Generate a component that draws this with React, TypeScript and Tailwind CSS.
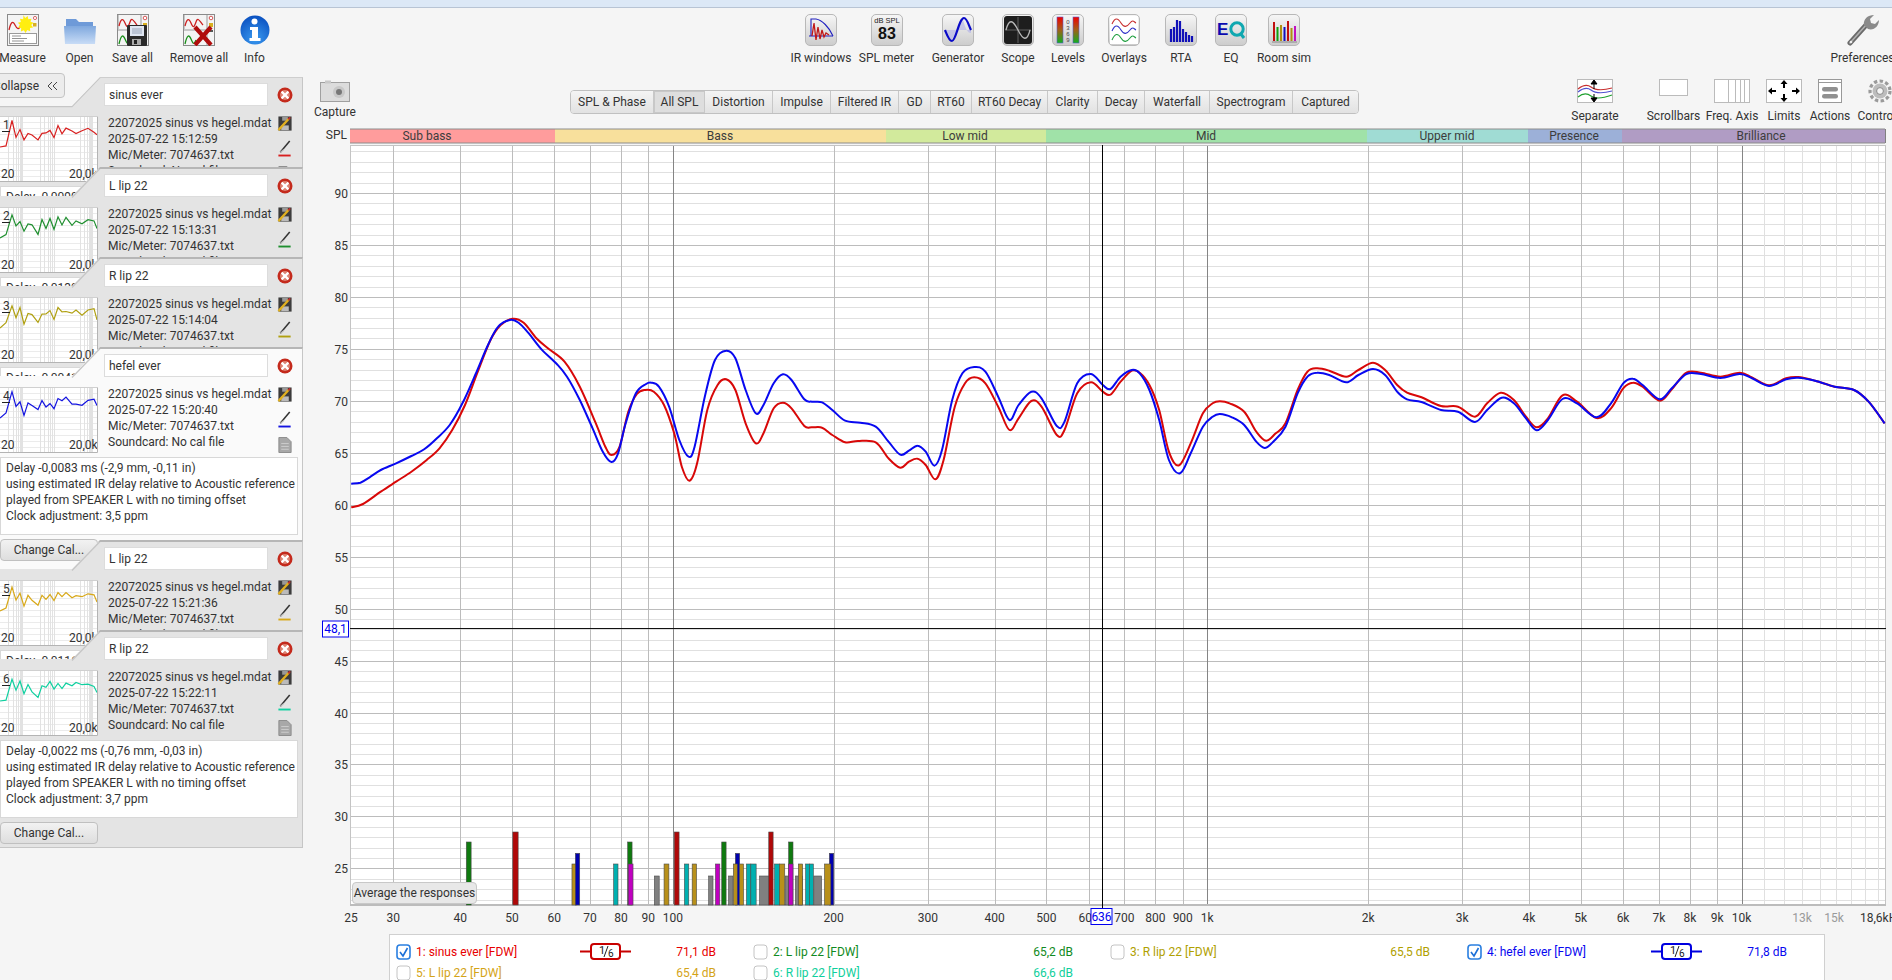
import type { ReactNode } from "react";

type Pt = [number, number];

// frequency and level to page pixels
const fx = (f: number) => 672.8 + 534.4 * Math.log10(f / 100);
const dy = (db: number) => 193 + (90 - db) * 10.39;
const snap = (v: number) => Math.round(v) + 0.5;

const smooth = (p: Pt[]) => {
  let d = `M${p[0][0].toFixed(1)} ${p[0][1].toFixed(1)}`;
  for (let i = 0; i < p.length - 1; i++) {
    const a = p[Math.max(i - 1, 0)];
    const b = p[i];
    const c = p[i + 1];
    const e = p[Math.min(i + 2, p.length - 1)];
    d += `C${(b[0] + (c[0] - a[0]) / 6).toFixed(1)} ${(b[1] + (c[1] - a[1]) / 6).toFixed(1)} ${(c[0] - (e[0] - b[0]) / 6).toFixed(1)} ${(c[1] - (e[1] - b[1]) / 6).toFixed(1)} ${c[0].toFixed(1)} ${c[1].toFixed(1)}`;
  }
  return d;
};

const lowBlue: Pt[] = [[22,581],[40,578],[58,562],[80,540],[110,520],[140,498],[165,478],[190,445],[215,405],[240,340],[265,255],[290,165],[310,110],[333,90],[350,98],[370,130],[395,178],[425,222],[445,260],[470,330],[495,415],[515,485],[532,516],[545,490],[560,400],[580,310],[600,282],[610,278],[625,290],[645,350],[665,450],[683,500],[695,470],[715,320],[735,210],[757,182],[775,205],[795,300],[815,370],[830,345],[850,280],[868,253],[885,270],[910,328],[925,335],[945,337],[965,360],[990,392],[1020,398],[1050,410],[1075,455],[1098,494],[1115,482],[1132,467],[1148,485],[1165,527],[1180,480],[1200,330],[1220,250],[1243,231],[1265,245],[1290,320],[1312,390],[1330,345],[1355,305],[1375,325],[1405,408],[1420,395],[1445,280],[1472,252],[1495,285],[1510,297],[1530,260],[1552,240]];
const lowRed: Pt[] = [[22,652],[45,642],[80,605],[110,575],[140,545],[170,510],[195,475],[220,420],[245,345],[270,245],[295,150],[315,105],[338,86],[360,98],[385,145],[410,178],[440,215],[470,290],[500,395],[520,470],[532,495],[548,470],[565,365],[582,312],[598,300],[615,305],[635,345],[655,430],[670,530],[685,572],[700,520],[720,360],[740,285],[757,268],[775,300],[795,400],[815,460],[830,430],[850,355],[868,338],[885,355],[910,408],[925,412],[945,413],[965,435],[990,457],[1015,453],[1050,457],[1075,505],[1098,533],[1115,515],[1132,506],[1148,525],[1167,568],[1183,510],[1205,350],[1225,280],[1243,262],[1265,280],[1290,350],[1312,420],[1330,385],[1355,333],[1375,350],[1405,435],[1420,420],[1445,310],[1472,277],[1495,305],[1510,314],[1530,275],[1552,242]];
const highBlue: Pt[] = [[20,160],[40,210],[60,300],[80,420],[103,460],[125,400],[150,320],[170,290],[185,282],[210,292],[235,315],[260,365],[277,384],[295,365],[320,320],[345,220],[365,170],[385,158],[410,165],[445,187],[470,165],[500,147],[525,165],[550,215],[570,238],[600,246],[640,270],[675,275],[710,306],[735,270],[765,233],[790,250],[815,295],[837,331],[860,300],[890,237],[920,250],[960,292],[990,250],[1015,190],[1035,176],[1055,195],[1090,238],[1115,205],[1145,162],[1175,162],[1215,174],[1255,162],[1280,175],[1315,198],[1350,178],[1375,173],[1410,182],[1450,200],[1490,210],[1520,245],[1553,310]];
const highRed: Pt[] = [[20,158],[40,195],[60,270],[80,395],[101,436],[125,370],[150,280],[170,250],[185,244],[205,250],[235,275],[260,335],[280,362],[300,340],[320,310],[345,210],[365,155],[385,145],[410,152],[445,170],[470,150],[500,128],[525,150],[550,195],[570,218],[600,232],[640,258],[675,260],[710,290],[735,250],[763,218],[790,240],[815,290],[837,322],[860,295],[890,226],[920,245],[960,294],[990,265],[1015,205],[1035,188],[1055,200],[1090,242],[1115,208],[1145,158],[1175,158],[1215,170],[1255,158],[1280,172],[1315,196],[1350,175],[1375,171],[1410,182],[1450,200],[1490,210],[1520,245],[1553,310]];

const low = (p: Pt[]) => p.map(([x, y]): Pt => [340 + x / 1.96, 290 + y / 3]);
const high = (p: Pt[]) => p.map(([x, y]): Pt => [1130 + x / 2.058, 320 + y / 3]);
const bluePath = smooth([...low(lowBlue), ...high(highBlue)]);
const redPath = smooth([...low(lowRed), ...high(highRed)]);

const RED = "#b00808";
const GRN = "#0f7a0f";
const GLD = "#b8901a";
const BLU = "#0000b0";
const TEA = "#00b0b0";
const MAG = "#c000c0";
const GRY = "#808080";

// [left, right, top] as read off the crop of the bars, 2.063x wide, 3x tall
const bars: [number, number, number, string][] = [
  [178,188,36,GRN],[274,285,6,RED],[396,405,102,GLD],[403,412,70,BLU],[482,491,102,TEA],[511,520,36,GRN],[512,522,102,MAG],
  [566,576,138,GRY],[586,596,102,GLD],[607,617,6,RED],[628,637,102,TEA],[644,653,102,GLD],[678,687,138,GRY],[692,701,102,MAG],
  [705,714,36,GRN],[719,728,138,GRY],[733,742,70,BLU],[729,737,102,GLD],[742,750,102,GLD],[756,765,102,TEA],[765,776,102,TEA],
  [783,803,138,GRY],[802,811,6,RED],[814,824,102,TEA],[824,835,102,GLD],[836,845,138,GRY],[843,852,36,GRN],[843,852,102,MAG],
  [857,872,138,GRY],[863,872,102,GLD],[878,886,102,TEA],[886,894,102,TEA],[895,911,138,GRY],[927,936,70,BLU],[917,930,102,GLD],
];

const bands: [string, number, number, number, string][] = [
  ["Sub bass", 350, 555, 427, "#ff9c9c"],
  ["Bass", 555, 886, 720, "#f8e09c"],
  ["Low mid", 886, 1046, 965, "#d2ea9c"],
  ["Mid", 1046, 1367, 1206, "#a0e2a8"],
  ["Upper mid", 1367, 1528, 1447, "#a0dcd4"],
  ["Presence", 1528, 1622, 1574, "#9cb0d8"],
  ["Brilliance", 1622, 1885, 1761, "#b09cc4"],
];

const freqLabels: [string, number][] = [
  ["25",25],["30",30],["40",40],["50",50],["60",60],["70",70],["80",80],["90",90],["100",100],["200",200],["300",300],["400",400],["500",500],["600",600],["700",700],["800",800],["900",900],
  ["1k",1000],["2k",2000],["3k",3000],["4k",4000],["5k",5000],["6k",6000],["7k",7000],["8k",8000],["9k",9000],["10k",10000],
];

const Chart = () => {
  const minor: number[] = [];
  for (let d = 94; d >= 22; d--) if (d % 5 !== 0) minor.push(d);
  const major = [90, 85, 80, 75, 70, 65, 60, 55, 50, 45, 40, 35, 30, 25];
  const vlines = [30, 40, 50, 60, 70, 80, 90, 200, 300, 400, 500, 600, 700, 800, 900, 2000, 3000, 4000, 5000, 6000, 7000, 8000, 9000];
  const hiLines = [11000, 12000, 13000, 14000, 15000, 16000, 17000, 18000];
  return (
    <svg viewBox="303 125 1589 809" className="block h-[809px] w-[1589px] shrink-0" fontFamily="Roboto,sans-serif" fontSize="12" fill="#333">
      <rect x="350" y="145" width="1536" height="760" fill="#fff" />
      {minor.map((d) => (
        <line key={d} x1="350" x2="1886" y1={snap(dy(d))} y2={snap(dy(d))} stroke="#e0e0e0" />
      ))}
      {major.map((d) => (
        <line key={d} x1="350" x2="1886" y1={snap(dy(d))} y2={snap(dy(d))} stroke="#bcbcbc" />
      ))}
      {hiLines.map((f) => (
        <line key={f} x1={snap(fx(f))} x2={snap(fx(f))} y1="145" y2="905" stroke="#e0e0e0" />
      ))}
      {vlines.map((f) => (
        <line key={f} x1={snap(fx(f))} x2={snap(fx(f))} y1="145" y2="905" stroke="#bcbcbc" />
      ))}
      {[100, 1000, 10000].map((f) => (
        <line key={f} x1={snap(fx(f))} x2={snap(fx(f))} y1="145" y2="905" stroke="#858585" />
      ))}
      <path d="M350.5 145V905M350 145.5H1886M1885.5 145V905" fill="none" stroke="#c4c4c4" />
      <line x1="350" x2="1886" y1="905" y2="905" stroke="#bcbcbc" strokeWidth="2" />

      {bands.map(([name, a, b, c, col]) => (
        <g key={name}>
          <rect x={a} y="129" width={b - a} height="14" fill={col} />
          <line x1={b + 0.5} x2={b + 0.5} y1="129" y2="143" stroke="#808080" />
          <text x={c} y="136" textAnchor="middle" dominantBaseline="central" fill="#3c3c3c">{name}</text>
        </g>
      ))}
      <path d="M350 129H1885M350 143H1885" stroke="#8c8c8c" fill="none" />

      <text x="347" y="135" textAnchor="end" dominantBaseline="central">SPL</text>
      {major.map((d) => (
        <text key={d} x="348" y={dy(d) + 1} textAnchor="end" dominantBaseline="central">{d}</text>
      ))}

      {bars.map(([l, r, t, col], i) => (
        <rect key={i} x={380 + l / 2.063} y={830 + t / 3} width={(r - l) / 2.063} height={905 - 830 - t / 3} fill={col} stroke="#4a4a4a" strokeWidth="0.6" />
      ))}

      <path d={redPath} fill="none" stroke="#d80808" strokeWidth="2" strokeLinejoin="round" />
      <path d={bluePath} fill="none" stroke="#0808f0" strokeWidth="2" strokeLinejoin="round" />

      <line x1="1102.5" x2="1102.5" y1="145" y2="908" stroke="#000" />
      <line x1="350" x2="1886" y1="628.5" y2="628.5" stroke="#111" />

      {freqLabels.map(([t, f]) => (
        <text key={t} x={f === 25 ? 351 : fx(f)} y="918" textAnchor="middle" dominantBaseline="central">{t}</text>
      ))}
      <text x="1802" y="918" textAnchor="middle" dominantBaseline="central" fill="#9a9a9a">13k</text>
      <text x="1834" y="918" textAnchor="middle" dominantBaseline="central" fill="#9a9a9a">15k</text>
      <text x="1860" y="918" dominantBaseline="central">18,6kHz</text>

      <rect x="1091" y="908.5" width="21" height="16" fill="#fff" stroke="#0000f0" />
      <text x="1101.5" y="917" textAnchor="middle" dominantBaseline="central" fill="#0000f0">636</text>
      <rect x="322.5" y="621" width="26" height="16" fill="#fff" stroke="#0000f0" />
      <text x="335.5" y="629" textAnchor="middle" dominantBaseline="central" fill="#0000f0">48,1</text>
    </svg>
  );
};

/* ---------- toolbar icons ---------- */

const Tile = ({ children }: { children: ReactNode }) => (
  <div className="h-[32px] w-[32px] overflow-hidden rounded-[5px] border border-[#b8b8b8] bg-linear-to-b from-[#f6f6f6] to-[#cdcdcd]">
    <svg viewBox="0 0 30 30" className="h-[30px] w-[30px]">{children}</svg>
  </div>
);

const Frame = ({ children }: { children: ReactNode }) => (
  <svg viewBox="0 0 32 32" className="h-[32px] w-[32px]">
    <rect x="0.5" y="0.5" width="31" height="31" fill="#f4f4f4" stroke="#8a8a8a" />
    {children}
  </svg>
);

const ReportBits = () => (
  <>
    <path d="M1 16H24M1 15V1M24 1V31" stroke="#9a9a9a" fill="none" />
    <path d="M2 12C4 4 6 4 8 9S11 14 13 8 17 8 20 11" fill="none" stroke="#cc2020" strokeWidth="1.3" />
    <path d="M2 30C4 21 6 20 8 25S11 31 13 26" fill="none" stroke="#1a8f1a" strokeWidth="1.3" />
    <circle cx="28" cy="4" r="1.8" fill="#fff" stroke="#cc3030" strokeWidth="0.8" />
    <rect x="26" y="9" width="4" height="4" fill="#d8b020" />
    <rect x="26" y="16" width="4" height="2" fill="#555" />
  </>
);

const MeasureIcon = () => (
  <Frame>
    <path d="M2 16C4 7 6 7 8 11S12 17 14 10" fill="none" stroke="#cc2020" strokeWidth="1.3" />
    <rect x="2.5" y="19.5" width="27" height="10" fill="#fff" stroke="#9a9a9a" />
    <path d="M5 22H14M5 24.5H20M5 27H17" stroke="#777" strokeWidth="0.8" />
    <circle cx="28" cy="4" r="1.6" fill="#fff" stroke="#cc3030" strokeWidth="0.7" />
    <rect x="26" y="9" width="3.5" height="3.5" fill="#d8b020" />
    <path d="M16.5 1l1.6 3 2.6-2 .6 3.2 3.2-.4-1 3 3 1-2.3 2.2 2 2.6-3.2.5.2 3.2-3-1.2-1.6 2.8-1.7-2.7-3 1.2.3-3.2-3.2-.6 2.1-2.5-2.3-2.3 3.1-.9-.9-3.1 3.2.5z" fill="#ffee10" />
  </Frame>
);

const FolderIcon = () => (
  <svg viewBox="0 0 32 32" className="h-[32px] w-[32px]">
    <defs>
      <linearGradient id="fold" x1="0" x2="0" y1="0" y2="1">
        <stop offset="0" stopColor="#7fa8de" />
        <stop offset="1" stopColor="#c8dcf6" />
      </linearGradient>
    </defs>
    <path d="M2 5h10l3 3h14v8H2z" fill="#6e9ad8" />
    <path d="M0 12h32l-1 18H1z" fill="url(#fold)" />
  </svg>
);

const SaveAllIcon = () => (
  <Frame>
    <ReportBits />
    <rect x="10" y="11" width="20" height="21" fill="#2a2a2a" rx="1" />
    <rect x="13" y="12" width="14" height="10" fill="#dfe6f2" />
    <path d="M15 15h10M15 17h10M15 19h10" stroke="#98a4b8" />
    <rect x="15" y="25" width="9" height="6" fill="#aaa" />
    <rect x="17" y="26" width="3" height="4" fill="#222" />
  </Frame>
);

const RemoveAllIcon = () => (
  <Frame>
    <ReportBits />
    <path d="M12 13l16 18M28 13L12 31" stroke="#b00c0c" strokeWidth="4.2" />
  </Frame>
);

const InfoIcon = () => (
  <svg viewBox="0 0 32 32" className="h-[32px] w-[32px]">
    <defs>
      <radialGradient id="infoFill" cx="0.5" cy="0.8" r="0.8">
        <stop offset="0" stopColor="#3a9af0" />
        <stop offset="1" stopColor="#0a50c0" />
      </radialGradient>
    </defs>
    <circle cx="16" cy="16" r="14.5" fill="url(#infoFill)" />
    <circle cx="15.5" cy="7.5" r="3" fill="#fff" />
    <path d="M11 13h8v11h2.5v3h-11v-3H13v-8h-2z" fill="#fff" />
  </svg>
);

const IrIcon = () => (
  <Tile>
    <path d="M5 21V4H10C16 5 23 12 27 21" fill="none" stroke="#2020c0" strokeWidth="1.1" />
    <path d="M3 21H27" stroke="#2020c0" strokeWidth="1" />
    <path d="M6 21L8 8 10 25 12 12 14 24 16 15 18 22 20 18 23 20" fill="none" stroke="#c01818" strokeWidth="1.3" />
  </Tile>
);

const SplIcon = () => (
  <Tile>
    <text x="15" y="8" textAnchor="middle" fontSize="7.5" fill="#222" fontFamily="'Liberation Sans',sans-serif">dB SPL</text>
    <text x="15" y="24" textAnchor="middle" fontSize="16" fontWeight="700" fill="#111" fontFamily="'Liberation Sans',sans-serif">83</text>
  </Tile>
);

const GeneratorIcon = () => (
  <Tile>
    <path d="M2 15H28V18C22 18 21 4 19 4 16 4 12 23 8 25 5 25 3 15 2 15Z" fill="#b6b6e8" opacity="0.7" />
    <path d="M2 15C4 20 6 26 9 26 13 26 16 3 21 3 24 3 26 11 28 15" fill="none" stroke="#0a0ac8" strokeWidth="2.2" />
  </Tile>
);

const ScopeIcon = () => (
  <Tile>
    <rect x="1" y="1" width="28" height="28" rx="3" fill="#1e1e1e" />
    <path d="M15 2V28M2 15H28" stroke="#606060" />
    <path d="M3 15C6 3 10 5 15 15S24 27 27 15" fill="none" stroke="#b8b8b8" strokeWidth="1.3" />
  </Tile>
);

const LevelsIcon = () => (
  <Tile>
    <defs>
      <linearGradient id="lvl" x1="0" x2="0" y1="0" y2="1">
        <stop offset="0" stopColor="#f00000" />
        <stop offset="0.5" stopColor="#a06018" />
        <stop offset="1" stopColor="#10b020" />
      </linearGradient>
    </defs>
    <rect x="4" y="2" width="6" height="26" fill="url(#lvl)" stroke="#6060d0" strokeWidth="0.6" />
    <rect x="20" y="2" width="6" height="26" fill="url(#lvl)" stroke="#6060d0" strokeWidth="0.6" />
    {["0", "3", "6", "9"].map((t, i) => (
      <text key={t} x="15" y={9 + i * 6} textAnchor="middle" fontSize="6" fill="#444" fontFamily="'Liberation Sans',sans-serif">{t}</text>
    ))}
  </Tile>
);

const OverlaysIcon = () => (
  <Tile>
    <rect x="1" y="1" width="28" height="28" fill="#fff" />
    <path d="M3 9C6 2 9 3 12 8S18 12 21 8 25 7 27 8" fill="none" stroke="#c83030" strokeWidth="1.1" />
    <path d="M3 16C6 9 9 10 12 15S18 19 21 15 25 14 27 15" fill="none" stroke="#3030c8" strokeWidth="1.1" />
    <path d="M3 25C6 18 9 18 12 23S18 27 21 23 25 22 27 23" fill="none" stroke="#20a040" strokeWidth="1.1" />
  </Tile>
);

const RtaIcon = () => (
  <Tile>
    <path d="M5 27V14M8 27V12M11 27V5M14 27V6M17 27V14M20 27V17M23 27V20M26 27V21" stroke="#1010b8" strokeWidth="2.2" />
  </Tile>
);

const EqIcon = () => (
  <Tile>
    <text x="1" y="20" fontSize="17" fontWeight="700" fill="#0a0ab0" fontFamily="'Liberation Sans',sans-serif">E</text>
    <circle cx="21" cy="14" r="6.2" fill="none" stroke="#10a8b0" strokeWidth="3" />
    <path d="M24 18l4 5" stroke="#10a8b0" strokeWidth="3" />
  </Tile>
);

const RoomIcon = () => (
  <Tile>
    <path d="M5 26V7" stroke="#c01010" strokeWidth="2" />
    <path d="M8.5 26V12" stroke="#10a010" strokeWidth="2" />
    <path d="M12 26V10" stroke="#b09010" strokeWidth="2" />
    <path d="M15.5 26V12" stroke="#1010c0" strokeWidth="2" />
    <path d="M19 26V6" stroke="#c01010" strokeWidth="2" />
    <path d="M22.5 26V13" stroke="#b09010" strokeWidth="2" />
    <path d="M26 26V11" stroke="#c010c0" strokeWidth="2" />
    <path d="M3 27H28" stroke="#888" />
  </Tile>
);

const WrenchIcon = () => (
  <svg viewBox="0 0 32 32" className="h-[32px] w-[32px]">
    <path d="M3 29L20 10" stroke="#6a6a6a" strokeWidth="5" strokeLinecap="round" />
    <path d="M3 29L20 10" stroke="#b0b0b0" strokeWidth="1.6" strokeLinecap="round" />
    <path d="M17 11C16 5 21 1 27 1L23 5 24 9 28 10 32 6C32 12 27 17 21 15Z" fill="#8a8a8a" />
    <circle cx="4" cy="28" r="1.3" fill="#eee" />
  </svg>
);

const CameraIcon = () => (
  <svg viewBox="0 0 30 22" className="h-[22px] w-[30px]">
    <rect x="0.5" y="2.5" width="29" height="19" fill="#dcdcdc" stroke="#a0a0a0" />
    <rect x="5" y="0.5" width="6" height="3" fill="#c8c8c8" />
    <circle cx="19" cy="12" r="6" fill="#c8c8c8" />
    <circle cx="19" cy="12" r="3" fill="#777" />
  </svg>
);

const SeparateIcon = () => (
  <svg viewBox="0 0 36 24" className="h-[24px] w-[36px]">
    <rect x="0.5" y="0.5" width="35" height="23" fill="#fff" stroke="#bbb" />
    <path d="M1 10C6 6 10 5 14 8S24 12 35 9" fill="none" stroke="#c83030" strokeWidth="1.2" />
    <path d="M1 13C6 9 10 8 14 11S24 15 35 12" fill="none" stroke="#5050d0" strokeWidth="1.2" />
    <path d="M1 18C6 14 10 14 14 17S24 20 35 16" fill="none" stroke="#20a030" strokeWidth="1.2" />
    <path d="M17 10V4M14 5l3-4 3 4zM17 15v5M14 19l3 4 3-4z" fill="#000" stroke="#000" />
  </svg>
);

const FreqIcon = () => (
  <svg viewBox="0 0 36 24" className="h-[24px] w-[36px]">
    <rect x="0.5" y="0.5" width="35" height="23" fill="#fff" stroke="#bbb" />
    <path d="M14.5 0V24M21.5 0V24M26.5 0V24M30.5 0V24" stroke="#bbb" />
  </svg>
);

const LimitsIcon = () => (
  <svg viewBox="0 0 36 24" className="h-[24px] w-[36px]">
    <rect x="0.5" y="0.5" width="35" height="23" fill="#fff" stroke="#bbb" />
    <path d="M18 1l3.5 4h-2.5v4h-2V5h-2.5zM18 23l3.5-4h-2.5v-4h-2v4h-2.5zM2 12l4-3.5V11h4v2H6v2.5zM34 12l-4-3.5V11h-4v2h4v2.5z" fill="#000" />
  </svg>
);

const ActionsIcon = () => (
  <svg viewBox="0 0 24 24" className="h-[24px] w-[24px]">
    <rect x="0.5" y="0.5" width="23" height="23" fill="#fff" stroke="#999" />
    <path d="M1 3.5H23" stroke="#999" />
    <rect x="4" y="8" width="16" height="4.5" rx="2.2" fill="#909090" />
    <rect x="4" y="15" width="16" height="4.5" rx="2.2" fill="#909090" />
  </svg>
);

const GearIcon = () => (
  <svg viewBox="0 0 24 24" className="h-[24px] w-[24px]">
    <circle cx="12" cy="12" r="10" fill="none" stroke="#9a9a9a" strokeWidth="3.2" strokeDasharray="3.4 2.4" />
    <circle cx="12" cy="12" r="7.5" fill="#bdbdbd" />
    <circle cx="12" cy="12" r="3.4" fill="#f5f5f5" stroke="#8a8a8a" />
  </svg>
);

/* ---------- sidebar bits ---------- */

const CloseIcon = () => (
  <svg viewBox="0 0 16 16" className="h-[16px] w-[16px]">
    <circle cx="8" cy="8" r="7.5" fill="#c42a1c" />
    <circle cx="8" cy="8" r="5" fill="#dc8474" />
    <path d="M4.6 4.6l6.8 6.8M11.4 4.6l-6.8 6.8" stroke="#fff" strokeWidth="2.2" />
  </svg>
);

const SaveIcon = () => (
  <svg viewBox="0 0 16 16" className="h-[16px] w-[16px]">
    <rect x="1" y="0.5" width="14" height="15" fill="#3c3c3c" />
    <rect x="4" y="10" width="8" height="5" fill="#bbb" />
    <rect x="5" y="1" width="6" height="4" fill="#999" />
    <path d="M1 15L12 3" stroke="#e0b020" strokeWidth="2.4" />
    <path d="M11.5 3.5l2-2" stroke="#c03030" strokeWidth="2" />
  </svg>
);

const PenIcon = ({ color }: { color: string }) => (
  <svg viewBox="0 0 14 18" className="h-[18px] w-[14px]">
    <path d="M2 13L12 1" stroke="#333" strokeWidth="1.6" />
    <path d="M2 13l4-3" stroke="#bbb" strokeWidth="1.2" />
    <rect x="0" y="15.5" width="13" height="2" fill={color} />
  </svg>
);

const DocIcon = () => (
  <svg viewBox="0 0 14 17" className="h-[17px] w-[14px]">
    <path d="M0.5 0.5H9L13.5 5V16.5H0.5Z" fill="#a8a8a8" stroke="#8a8a8a" />
    <path d="M3 7H11M3 10H11M3 13H11" stroke="#d0d0d0" />
  </svg>
);

// jagged thumbnail trace, y relative to the thumbnail
const thumbBase: Pt[] = [[0,31],[6,28],[12,7],[16,20],[20,13],[24,26],[28,15],[32,20],[38,25],[42,15],[46,19],[50,14],[54,20],[58,12],[62,16],[66,12],[72,17],[76,15],[82,16],[88,13],[94,14],[97,21]];

const Thumb = ({ n, color }: { n: number; color: string }) => {
  const pts = thumbBase.map(([x, y], i): Pt => [x, y + (i > 0 ? Math.sin(i * (n + 1.3)) * 2.5 : 0)]);
  const d = pts.map(([x, y]) => `${x},${y.toFixed(1)}`).join(" ");
  const dense = [8, 13, 16, 18, 20, 21, 22, 40, 44, 48, 50, 52, 54, 80, 84, 87, 89, 90, 91, 92];
  return (
    <svg viewBox="0 0 98 66" className="h-[66px] w-[98px] shrink-0" fontFamily="Roboto,sans-serif" fontSize="12" fill="#333">
      <rect width="98" height="66" fill="#fff" />
      {[6, 12, 18, 24, 30, 36, 42, 48, 54, 60].map((y) => (
        <line key={y} x1="0" x2="98" y1={y + 0.5} y2={y + 0.5} stroke="#ebebeb" />
      ))}
      {dense.map((x) => (
        <line key={x} x1={x + 0.5} x2={x + 0.5} y1="0" y2="66" stroke="#e2e2e2" />
      ))}
      <polyline points={d} fill="none" stroke={color} strokeWidth="1.2" />
      <text x="3" y="13">{n}</text>
      <line x1="2" x2="10" y1="15.5" y2="15.5" stroke="#222" />
      <text x="1" y="62">20</text>
      <text x="69" y="62">20,0k</text>
      <path d="M97.5 0V65.5H0" fill="none" stroke="#b4b4b4" />
      <path d="M0 0.5H98" stroke="#d0d0d0" />
    </svg>
  );
};

interface Meas {
  n: number;
  name: string;
  time: string;
  color: string;
  delay: string;
  clock: string;
  open?: boolean;
  last?: boolean;
}

const measurements: Meas[] = [
  { n: 1, name: "sinus ever", time: "15:12:59", color: "#d82020", delay: "-0,0090 ms (-3,1 mm, -0,12 in)", clock: "3,4 ppm" },
  { n: 2, name: "L lip 22", time: "15:13:31", color: "#1f8f2f", delay: "-0,0130 ms (-4,5 mm, -0,18 in)", clock: "3,5 ppm" },
  { n: 3, name: "R lip 22", time: "15:14:04", color: "#b0a010", delay: "-0,0041 ms (-1,4 mm, -0,06 in)", clock: "3,6 ppm" },
  { n: 4, name: "hefel ever", time: "15:20:40", color: "#1414e0", delay: "-0,0083 ms (-2,9 mm, -0,11 in)", clock: "3,5 ppm", open: true },
  { n: 5, name: "L lip 22", time: "15:21:36", color: "#d8a818", delay: "-0,0116 ms (-4,0 mm, -0,16 in)", clock: "3,6 ppm" },
  { n: 6, name: "R lip 22", time: "15:22:11", color: "#10d0a0", delay: "-0,0022 ms (-0,76 mm, -0,03 in)", clock: "3,7 ppm", open: true, last: true },
];

const MeasureCard = ({ m }: { m: Meas }) => {
  const white = m.open && !m.last;
  return (
    <div className={m.last ? "relative h-[218px]" : m.open ? "relative h-[193px]" : "relative h-[90px]"}>
      <div
        className={`relative overflow-hidden border-r border-[#c6c6c6] [clip-path:polygon(100px_0,100%_0,100%_100%,0_100%,0_29px,72px_29px)] ${
          m.last ? "h-[218px] border-b" : m.open ? "h-[222px]" : "h-[119px]"
        } ${white ? "bg-[#fafafa]" : "bg-[#e4e4e4]"} ${m.n === 1 ? "border-t border-t-[#cecece]" : "border-t-2 border-t-[#b6b6b6]"}`}
      >
        <div className="mt-[5px] flex h-[23px] items-center pl-[104px]">
          <div className="flex h-[23px] w-[164px] items-center border border-[#dcdcdc] bg-white pl-[4px]">{m.name}</div>
          <div className="ml-[9px]">
            <CloseIcon />
          </div>
        </div>
        <div className="mt-[10px] flex h-[66px]">
          <Thumb n={m.n} color={m.color} />
          <div className="-mt-[1px] ml-[10px] w-[165px] whitespace-nowrap leading-[16px]">
            <div>22072025 sinus vs hegel.mdat</div>
            <div>2025-07-22 {m.time}</div>
            <div>Mic/Meter: 7074637.txt</div>
            <div>Soundcard: No cal file</div>
          </div>
          <div className="flex w-[24px] flex-col items-center gap-[9px]">
            <SaveIcon />
            <PenIcon color={m.color} />
            <DocIcon />
          </div>
        </div>
        <div className="mt-[4px] h-[78px] w-[298px] whitespace-nowrap border border-[#d8d8d8] bg-white pl-[5px] pt-[2px] leading-[16px]">
          <div>Delay {m.delay}</div>
          <div>using estimated IR delay relative to Acoustic reference</div>
          <div>played from SPEAKER L with no timing offset</div>
          <div>Clock adjustment: {m.clock}</div>
        </div>
        <button className="mt-[4px] flex h-[22px] w-[98px] items-center justify-center rounded-[4px] border border-[#c0c0c0] bg-linear-to-b from-[#f2f2f2] to-[#dedede] text-[#333]">
          Change Cal...
        </button>
        {/* cut corner outline */}
        <svg viewBox="0 0 104 32" className="absolute left-0 top-[-2px] h-[32px] w-[104px]">
          <path d={m.n === 1 ? "M0 30.5H72L100.5 1" : "M72 30.5L100.5 1"} fill="none" stroke="#c6c6c6" strokeWidth="1.4" />
        </svg>
      </div>
    </div>
  );
};

const Collapse = () => (
  <button className="absolute left-[-14px] top-[3px] flex h-[25px] w-[79px] items-center justify-center gap-[8px] rounded-[4px] border border-[#c4c4c4] bg-[#ececec] text-[#333]">
    <span>Collapse</span>
    <svg viewBox="0 0 11 10" className="h-[10px] w-[11px]">
      <path d="M5 1L1 5l4 4M10 1L6 5l4 4" fill="none" stroke="#444" />
    </svg>
  </button>
);

/* ---------- legend ---------- */

const Box = ({ on }: { on?: boolean }) =>
  on ? (
    <svg viewBox="0 0 15 16" className="h-[16px] w-[15px] shrink-0">
      <rect x="1" y="1" width="13" height="14" rx="3" fill="#fff" stroke="#2a7fe0" strokeWidth="1.6" />
      <path d="M4 8l3 4 4.5-8" fill="none" stroke="#1a6fd8" strokeWidth="1.6" />
    </svg>
  ) : (
    <svg viewBox="0 0 15 16" className="h-[16px] w-[15px] shrink-0">
      <rect x="1" y="1" width="13" height="14" rx="3" fill="#fff" stroke="#c4c4c4" />
    </svg>
  );

const Sixth = ({ color }: { color: string }) => (
  <svg viewBox="0 0 51 17" className="h-[17px] w-[51px]" fontFamily="Roboto,sans-serif" fill="#222">
    <line x1="0" x2="51" y1="8.5" y2="8.5" stroke={color} strokeWidth="2" />
    <rect x="11" y="1" width="29" height="15" rx="3" fill="#fff" stroke={color} strokeWidth="2" />
    <text x="19" y="11" fontSize="11">1</text>
    <line x1="24" x2="28" y1="14" y2="3" stroke="#222" />
    <text x="28" y="14" fontSize="10">6</text>
  </svg>
);

const legend = [
  { on: true, label: "1: sinus ever [FDW]", db: "71,1 dB", text: "text-[#e80000]", line: "#c80000" },
  { label: "2: L lip 22 [FDW]", db: "65,2 dB", text: "text-[#118a22]" },
  { label: "3: R lip 22 [FDW]", db: "65,5 dB", text: "text-[#b0a000]" },
  { on: true, label: "4: hefel ever [FDW]", db: "71,8 dB", text: "text-[#0808f0]", line: "#0000e0" },
  { label: "5: L lip 22 [FDW]", db: "65,4 dB", text: "text-[#d4a418]" },
  { label: "6: R lip 22 [FDW]", db: "66,6 dB", text: "text-[#10cf9c]" },
];

const Legend = () => (
  <div className="ml-[86px] h-[46px] w-[1436px] border border-b-0 border-[#d0d0d0] bg-white pl-[6px] pt-[6px]">
    <div className="grid grid-cols-[repeat(4,357px)] auto-rows-[21px]">
      {legend.map((e) => (
        <div key={e.label} className={`flex items-center ${e.text}`}>
          <Box on={e.on} />
          <span className="ml-[5px] w-[164px] whitespace-nowrap">{e.label}</span>
          <span className="w-[51px]">{e.line && <Sixth color={e.line} />}</span>
          <span className="w-[85px] text-right">{e.db}</span>
        </div>
      ))}
    </div>
  </div>
);

/* ---------- page ---------- */

const ToolButton = ({ icon, label, w }: { icon: ReactNode; label: string; w: string }) => (
  <div className={`flex shrink-0 flex-col items-center ${w}`}>
    <div className="flex h-[32px] items-center justify-center">{icon}</div>
    <span className="mt-[4px] whitespace-nowrap leading-[16px]">{label}</span>
  </div>
);

const SubButton = ({ icon, label, w }: { icon: ReactNode; label: string; w: string }) => (
  <div className={`flex shrink-0 flex-col items-center ${w}`}>
    <div className="flex h-[29px] items-start justify-center">{icon}</div>
    <span className="whitespace-nowrap leading-[16px]">{label}</span>
  </div>
);

const tabs: [string, string][] = [
  ["SPL & Phase", "w-[83px]"], ["All SPL", "w-[51px]"], ["Distortion", "w-[68px]"], ["Impulse", "w-[58px]"], ["Filtered IR", "w-[68px]"],
  ["GD", "w-[32px]"], ["RT60", "w-[41px]"], ["RT60 Decay", "w-[76px]"], ["Clarity", "w-[50px]"], ["Decay", "w-[47px]"],
  ["Waterfall", "w-[65px]"], ["Spectrogram", "w-[83px]"], ["Captured", "w-[65px]"],
];

export default function App() {
  return (
    <div className="flex h-[980px] w-[1892px] flex-col overflow-hidden bg-[#f5f5f5] font-['Roboto',sans-serif] text-[12px] text-[#333]">
      <div className="h-[8px] shrink-0 border-b border-[#b8c4d4] bg-[#dce8f6]" />

      <div className="flex h-[62px] shrink-0 pt-[6px]">
        <ToolButton icon={<MeasureIcon />} label="Measure" w="w-[45px]" />
        <ToolButton icon={<FolderIcon />} label="Open" w="w-[69px]" />
        <ToolButton icon={<SaveAllIcon />} label="Save all" w="w-[37px]" />
        <ToolButton icon={<RemoveAllIcon />} label="Remove all" w="w-[96px]" />
        <ToolButton icon={<InfoIcon />} label="Info" w="w-[15px]" />
        <div className="w-[529px] shrink-0" />
        <ToolButton icon={<IrIcon />} label="IR windows" w="w-[60px]" />
        <ToolButton icon={<SplIcon />} label="SPL meter" w="w-[71px]" />
        <ToolButton icon={<GeneratorIcon />} label="Generator" w="w-[72px]" />
        <ToolButton icon={<ScopeIcon />} label="Scope" w="w-[48px]" />
        <ToolButton icon={<LevelsIcon />} label="Levels" w="w-[52px]" />
        <ToolButton icon={<OverlaysIcon />} label="Overlays" w="w-[60px]" />
        <ToolButton icon={<RtaIcon />} label="RTA" w="w-[54px]" />
        <ToolButton icon={<EqIcon />} label="EQ" w="w-[46px]" />
        <ToolButton icon={<RoomIcon />} label="Room sim" w="w-[60px]" />
        <div className="w-[518px] shrink-0" />
        <ToolButton icon={<WrenchIcon />} label="Preferences" w="w-[61px]" />
      </div>

      <div className="flex min-h-0 flex-1">
        <aside className="relative w-[303px] shrink-0 pt-[7px]">
          <Collapse />
          {measurements.map((m) => (
            <MeasureCard key={m.n} m={m} />
          ))}
        </aside>

        <main className="flex w-[1589px] shrink-0 flex-col">
          <div className="flex h-[55px] shrink-0">
            <div className="ml-[11px] flex w-[42px] shrink-0 flex-col items-center pt-[10px]">
              <CameraIcon />
              <span className="mt-[2px] leading-[16px]">Capture</span>
            </div>
            <div className="ml-[214px] mt-[20px] flex h-[24px] shrink-0 overflow-hidden rounded-[4px] border border-[#c0c0c0]">
              {tabs.map(([t, w]) => (
                <div
                  key={t}
                  className={`flex shrink-0 items-center justify-center border-r border-[#c8c8c8] last:border-r-0 ${w} ${
                    t === "All SPL"
                      ? "border border-[#8c8c8c] bg-[#dedede]"
                      : "bg-linear-to-b from-[#f4f4f4] to-[#e2e2e2]"
                  }`}
                >
                  {t}
                </div>
              ))}
            </div>
            <div className="ml-[213px] flex shrink-0 pt-[9px]">
              <SubButton icon={<SeparateIcon />} label="Separate" w="w-[46px]" />
              <div className="ml-[27px]">
                <SubButton icon={<div className="h-[17px] w-[29px] border border-[#bbb] bg-white" />} label="Scrollbars" w="w-[57px]" />
              </div>
              <SubButton icon={<FreqIcon />} label="Freq. Axis" w="w-[60px]" />
              <SubButton icon={<LimitsIcon />} label="Limits" w="w-[44px]" />
              <SubButton icon={<ActionsIcon />} label="Actions" w="w-[48px]" />
              <SubButton icon={<GearIcon />} label="Controls" w="w-[52px]" />
            </div>
          </div>

          <div className="relative">
            <Chart />
            <button className="absolute left-[49px] top-[757px] flex h-[22px] w-[125px] items-center justify-center whitespace-nowrap rounded-[4px] border border-[#c8c8c8] bg-[#e8e8e8] text-[#333]">
              Average the responses
            </button>
          </div>
          <Legend />
        </main>
      </div>
    </div>
  );
}
